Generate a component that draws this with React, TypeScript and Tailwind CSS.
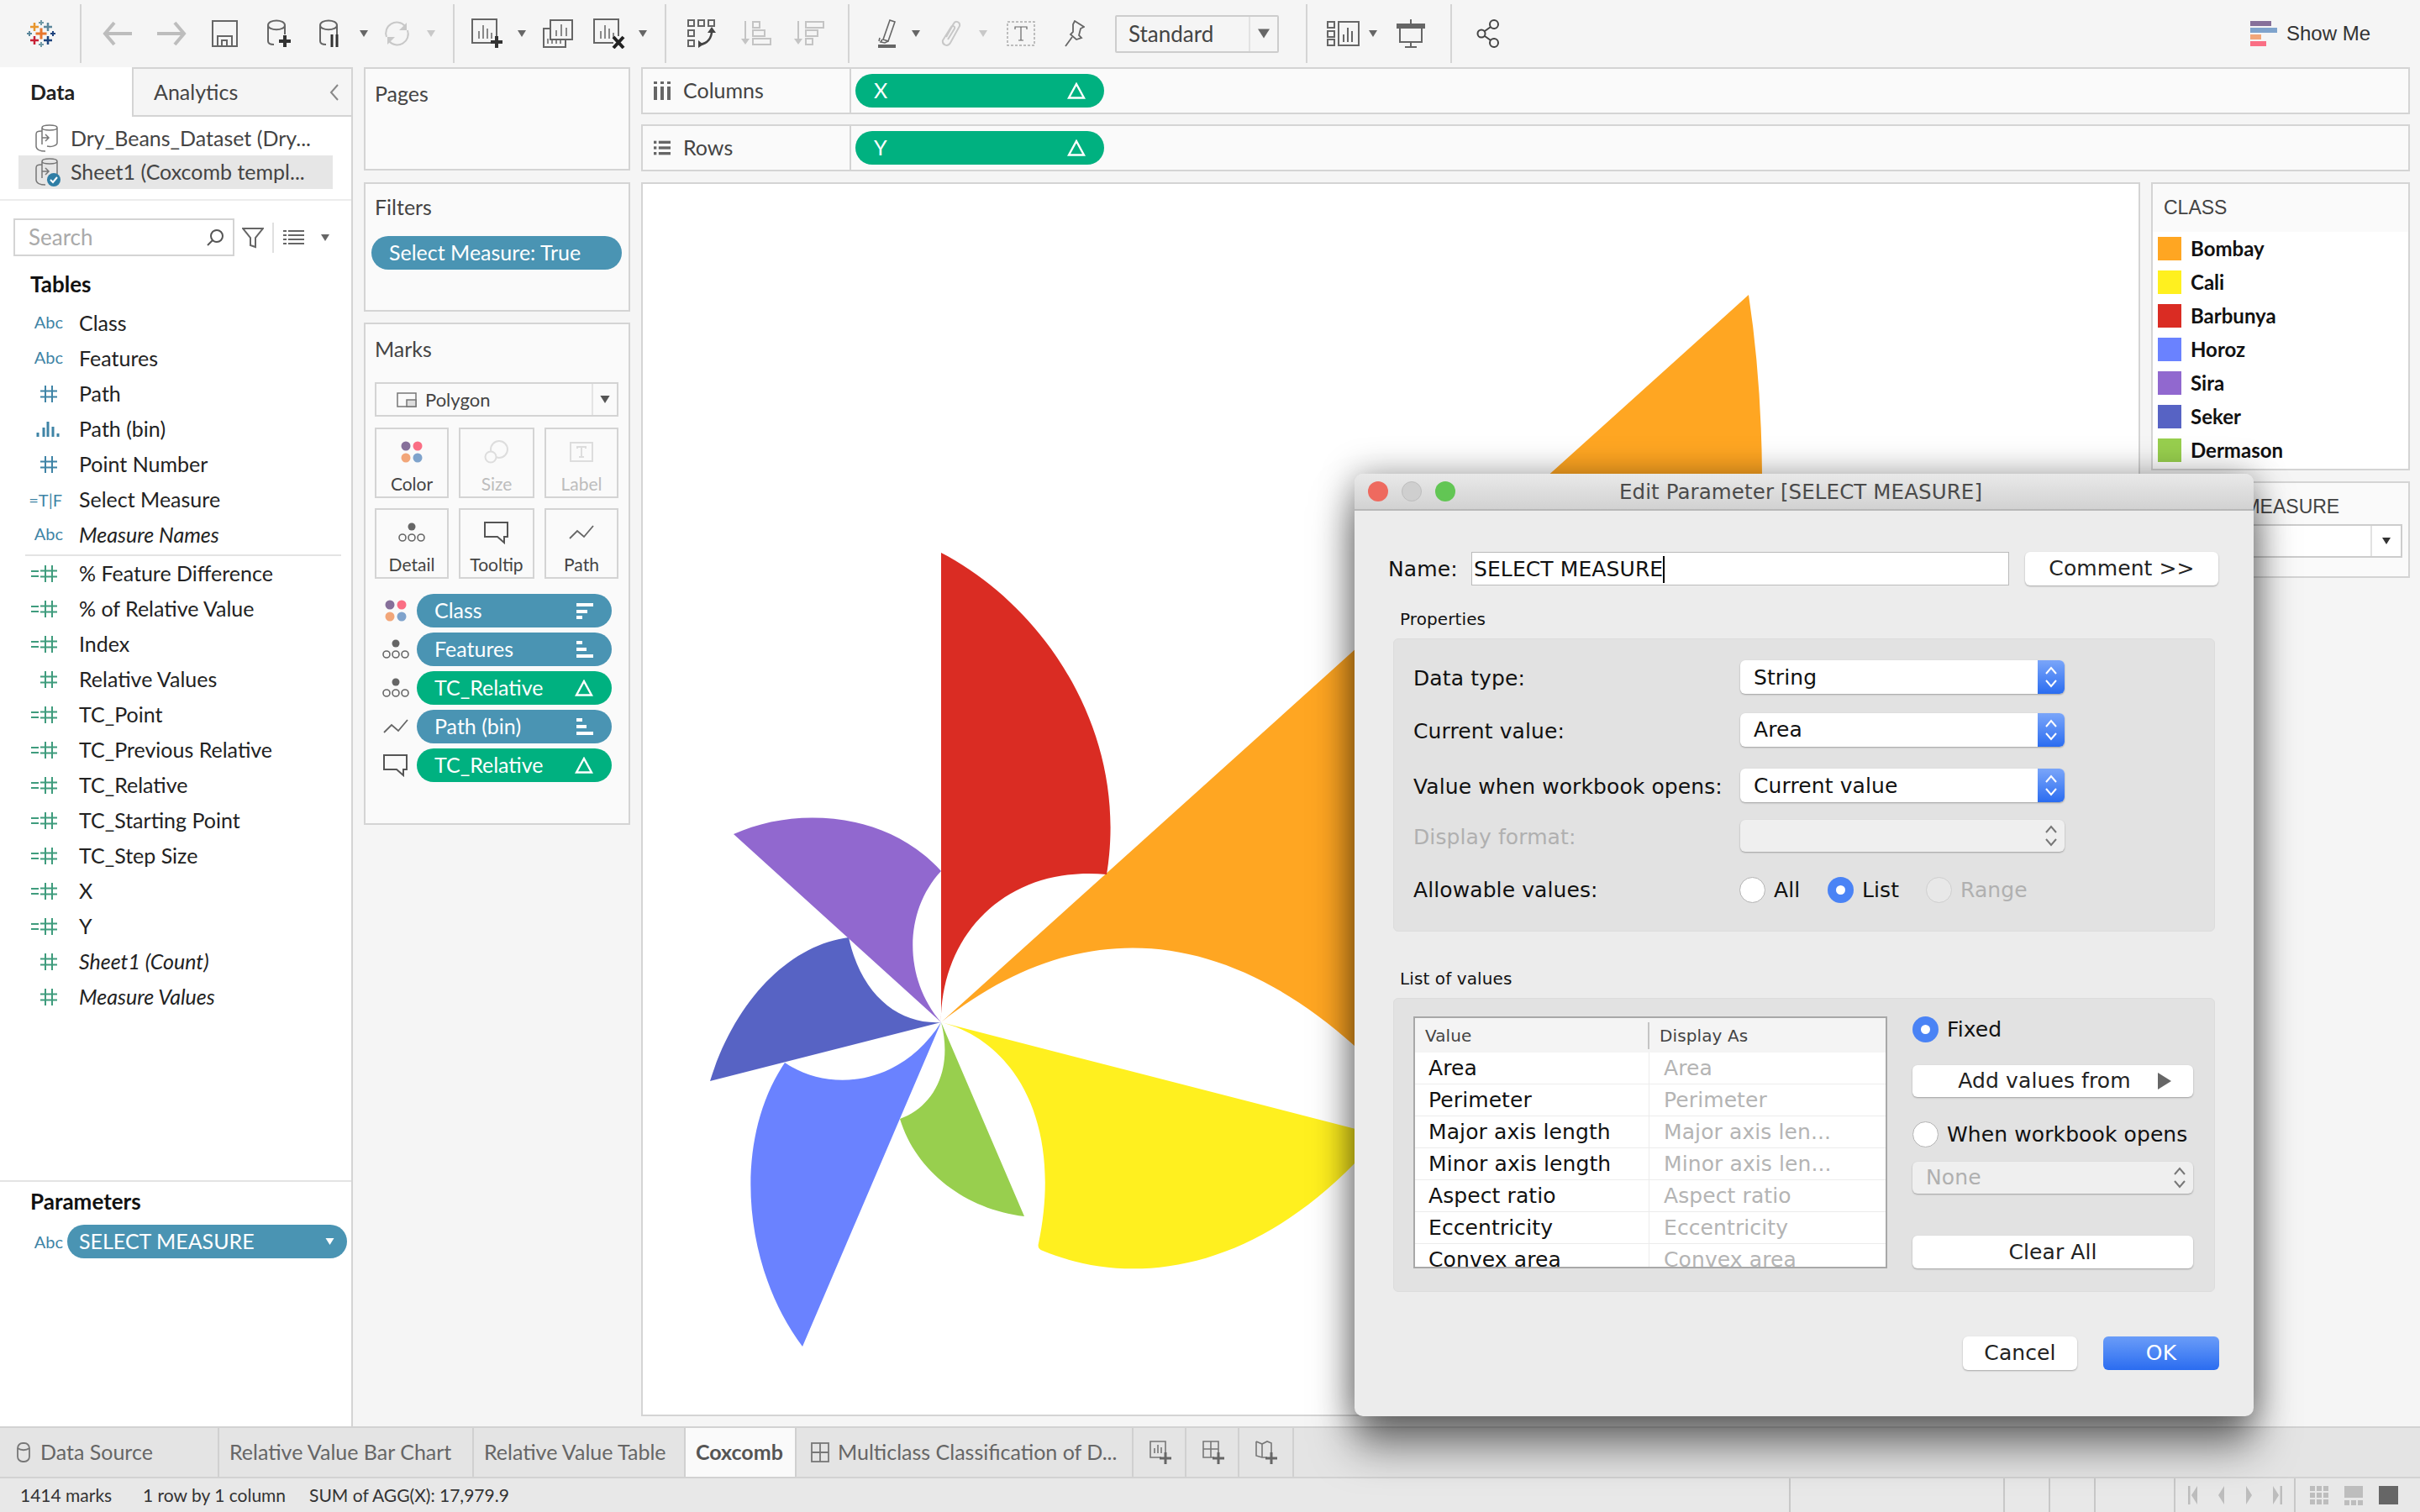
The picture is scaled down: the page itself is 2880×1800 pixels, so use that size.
import React from "react";

const Chart = () => (
  <svg viewBox="765 219 1780 1465" className="w-full h-full block">
    <path fill="#ffa622" d="M1120 1217 L2081 351 Q2096 450 2097 564 C2100 800 2050 1200 1900 1450 L1612 1245 C1450 1100 1280 1090 1120 1217 Z" />
    <path fill="#fff01f" d="M1120 1217 L1900 1418 L1612 1385 C1480 1520 1340 1530 1241 1489 Q1234 1487 1236 1480 C1265 1340 1210 1240 1120 1217 Z" />
    <path fill="#da2c23" d="M1120 1217 L1120 658 C1240 720 1345 870 1317 1041 C1200 1030 1120 1110 1120 1217 Z" />
    <path fill="#6a82ff" d="M1120 1217 L955 1603 C885 1510 870 1360 934 1265 C985 1300 1070 1295 1120 1217 Z" />
    <path fill="#5763c4" d="M1120 1217 L845 1287 C875 1190 940 1125 1010 1116 C1025 1185 1070 1220 1120 1217 Z" />
    <path fill="#9168cf" d="M1120 1217 L873 993 C945 960 1055 965 1120 1037 C1075 1085 1075 1165 1120 1217 Z" />
    <path fill="#98cf4e" d="M1120 1217 L1219 1448 C1150 1440 1090 1395 1071 1332 C1110 1318 1135 1275 1120 1217 Z" />
  </svg>
);

const Caret = ({ c = "#666", w = 10, h = 8 }: { c?: string; w?: number; h?: number }) => (
  <svg width={w} height={h} viewBox="0 0 10 8"><path d="M0 0H10L5 8Z" fill={c} /></svg>
);
const Sep = ({ ml }: { ml: string }) => <div className={`${ml} w-[2px] h-[70px] bg-[#d4d4d4] shrink-0`} />;

const S = "#666";
const Logo = () => {
  const cross = (x: number, y: number, r: number, c: string, sw = 2) => (
    <path d={`M${x - r} ${y}H${x + r}M${x} ${y - r}V${y + r}`} stroke={c} strokeWidth={sw} fill="none" />
  );
  return (
    <svg width="34" height="32" viewBox="0 0 34 32">
      {cross(17, 16, 6.5, "#e8762c", 3)}
      {cross(9, 8, 5, "#e8962c", 2.5)}
      {cross(25, 8, 5, "#5b879b", 2.5)}
      {cross(9, 24, 5, "#c72035", 2.5)}
      {cross(25, 24, 5, "#1f457e", 2.5)}
      {cross(17, 3, 3, "#7099a6")}
      {cross(17, 29, 3, "#7099a6")}
      {cross(3, 16, 3, "#5b879b")}
      {cross(31, 16, 3, "#1f447e")}
    </svg>
  );
};
const Arrow = ({ flip }: { flip?: boolean }) => (
  <svg width="35" height="30" viewBox="0 0 35 30" className={flip ? "-scale-x-100" : ""}>
    <path d="M14 2L3 15L14 28M3 15H35" stroke="#bdbdbd" strokeWidth="4" fill="none" />
  </svg>
);
const Save = () => (
  <svg width="31" height="32" viewBox="0 0 31 32" fill="none" stroke={S} strokeWidth="2">
    <rect x="1" y="1" width="29" height="30" />
    <path d="M7 31V19H24V31M12 31V24H18V31" />
  </svg>
);
const Cyl = ({ extra }: { extra: React.ReactNode }) => (
  <svg width="30" height="34" viewBox="0 0 30 34" fill="none" stroke={S} strokeWidth="2">
    <path d="M1 7C1 -0.5 21 -0.5 21 7C21 14 1 14 1 7V26C1 29 4 30 8 30M21 7V18" />
    {extra}
  </svg>
);
const Plus = ({ x, y }: { x: number; y: number }) => (
  <path d={`M${x - 7} ${y}H${x + 7}M${x} ${y - 7}V${y + 7}`} stroke="#333" strokeWidth="4" fill="none" />
);
const Refresh = () => (
  <svg width="35" height="32" viewBox="0 0 35 32" fill="none" stroke="#c8c8c8" strokeWidth="2">
    <path d="M5 20A13 13 0 0 1 27 7M30 12A13 13 0 0 1 8 25" />
    <path d="M29 3V12H20M6 29V20H15" fill="#c8c8c8" stroke="none" />
  </svg>
);
const Sheet = ({ mark }: { mark: React.ReactNode }) => (
  <svg width="39" height="36" viewBox="0 0 39 36" fill="none" stroke={S} strokeWidth="2">
    <path d="M24 29H1V1H30V21" />
    <path d="M9 24V15M14 24V8M19 24V12M24 24V17" strokeWidth="1.5" />
    {mark}
  </svg>
);
const Dup = () => (
  <svg width="36" height="34" viewBox="0 0 36 34" fill="none" stroke={S} strokeWidth="2">
    <rect x="9" y="1" width="26" height="23" fill="#f5f5f5" />
    <path d="M9 11H1V33H27V24" />
    <path d="M16 20V13M22 20V6M28 20V10" strokeWidth="1.5" />
    <path d="M6 29V23M11 29V23M16 29V23M21 29V23" strokeWidth="1.5" />
  </svg>
);
const Swap = () => (
  <svg width="35" height="34" viewBox="0 0 35 34" fill="none" stroke={S} strokeWidth="2">
    <rect x="1" y="1" width="7" height="7" /><rect x="13" y="1" width="7" height="7" /><rect x="25" y="1" width="7" height="7" />
    <rect x="1" y="13" width="7" height="7" /><rect x="1" y="25" width="7" height="7" />
    <path d="M29 14C29 22 24 29 15 30" stroke="#444" strokeWidth="2.5" />
    <path d="M29 9L34 16H24ZM13 25L13 34L19 30Z" fill="#444" stroke="none" />
  </svg>
);
const SortI = ({ desc }: { desc?: boolean }) => (
  <svg width="36" height="30" viewBox="0 0 36 30" fill="none" stroke="#c4c4c4" strokeWidth="2">
    <path d="M5 0V26" />
    <path d="M0 21H10L5 28Z" fill="#c4c4c4" stroke="none" />
    {desc ? (
      <>
        <rect x="14" y="1" width="21" height="7" /><rect x="14" y="11" width="14" height="7" /><rect x="14" y="21" width="8" height="7" />
      </>
    ) : (
      <>
        <rect x="14" y="1" width="8" height="7" /><rect x="14" y="11" width="14" height="7" /><rect x="14" y="21" width="21" height="7" />
      </>
    )}
  </svg>
);
const Highlighter = () => (
  <svg width="21" height="34" viewBox="0 0 21 34" fill="none" stroke={S} strokeWidth="1.6">
    <path d="M6 24L14 1L20 3L12 26Z" />
    <path d="M5 24L3 27L8 28L12 26M2 22L1 26" />
    <rect x="0" y="30" width="21" height="4" fill={S} stroke="none" />
  </svg>
);
const Clip = () => (
  <svg width="24" height="32" viewBox="0 0 24 32" fill="none" stroke="#c8c8c8" strokeWidth="2">
    <path d="M6 20L15 4C17 0 23 2 22 7L11 27C8 32 1 30 2 24L12 8C13 6 17 7 16 10L8 23" />
  </svg>
);
const TBox = () => (
  <svg width="34" height="30" viewBox="0 0 34 30" fill="none">
    <rect x="1" y="1" width="32" height="28" stroke="#aaa" strokeWidth="1.5" strokeDasharray="3 2" />
    <path d="M10 10V7H24V10M17 7V23M14 23H20" stroke={S} strokeWidth="1.2" />
  </svg>
);
const Pin = () => (
  <svg width="26" height="32" viewBox="0 0 26 32" fill="none" stroke={S} strokeWidth="1.8">
    <path d="M14 1L25 8L21 10L19 18L22 21L16 23L9 17L12 14L12 5Z" />
    <path d="M11 20L3 31" />
  </svg>
);
const Cards = () => (
  <svg width="39" height="30" viewBox="0 0 39 30" fill="none" stroke={S} strokeWidth="2">
    <rect x="1" y="1" width="8" height="7" /><rect x="1" y="12" width="8" height="7" /><rect x="1" y="22" width="8" height="7" />
    <rect x="14" y="1" width="24" height="28" />
    <path d="M20 25V16M25 25V8M30 25V12" />
  </svg>
);
const Pres = () => (
  <svg width="34" height="34" viewBox="0 0 34 34" fill="none" stroke={S} strokeWidth="2">
    <path d="M17 0V5M17 27V33M10 33H24" />
    <rect x="0" y="5" width="34" height="6" fill={S} stroke="none" />
    <path d="M4 10V27H30V10" />
  </svg>
);
const Share = () => (
  <svg width="28" height="34" viewBox="0 0 28 34" fill="none" stroke="#444" strokeWidth="2">
    <circle cx="6" cy="17" r="4.5" /><circle cx="21" cy="6" r="5" /><circle cx="21" cy="28" r="5" />
    <path d="M10 14L17 9M10 20L17 25" />
  </svg>
);
const ShowMeIcon = () => (
  <svg width="32" height="30" viewBox="0 0 32 30">
    <rect x="0" y="0" width="25" height="6" fill="#86709a" />
    <rect x="0" y="8" width="32" height="6" fill="#7fa3cc" />
    <rect x="0" y="16" width="13" height="6" fill="#f2a679" />
    <rect x="0" y="24" width="19" height="6" fill="#fa6e84" />
  </svg>
);

const Hash = ({ c = "#3f9c7d" }: { c?: string }) => (
  <svg width="20" height="20" viewBox="0 0 20 20" stroke={c} strokeWidth="2" fill="none">
    <path d="M6 0V20M14 0V20M0 6.5H20M0 13.5H20" />
  </svg>
);
const CalcHash = () => (
  <div className="flex items-center gap-[2px]">
    <svg width="9" height="8" viewBox="0 0 9 8"><path d="M0 1H9M0 7H9" stroke="#3f9c7d" strokeWidth="2" /></svg>
    <Hash />
  </div>
);
const BarsI = () => (
  <svg width="28" height="18" viewBox="0 0 28 18" stroke="#3f84a6" strokeWidth="3">
    <path d="M2 18V13M9 18V7M14 18V0M20 18V6M26 18V14" />
  </svg>
);
const Abc = () => <span className="text-[20px] text-[#3f84a6] leading-none">Abc</span>;

type F = { n: string; k: string; it?: boolean };
const dims: F[] = [
  { n: "Class", k: "abc" },
  { n: "Features", k: "abc" },
  { n: "Path", k: "bhash" },
  { n: "Path (bin)", k: "bars" },
  { n: "Point Number", k: "bhash" },
  { n: "Select Measure", k: "tf" },
  { n: "Measure Names", k: "abc", it: true },
];
const meas: F[] = [
  { n: "% Feature Difference", k: "calc" },
  { n: "% of Relative Value", k: "calc" },
  { n: "Index", k: "calc" },
  { n: "Relative Values", k: "hash" },
  { n: "TC_Point", k: "calc" },
  { n: "TC_Previous Relative", k: "calc" },
  { n: "TC_Relative", k: "calc" },
  { n: "TC_Starting Point", k: "calc" },
  { n: "TC_Step Size", k: "calc" },
  { n: "X", k: "calc" },
  { n: "Y", k: "calc" },
  { n: "Sheet1 (Count)", k: "hash", it: true },
  { n: "Measure Values", k: "hash", it: true },
];
const FieldIcon = ({ k }: { k: string }) => {
  if (k === "abc") return <div className="pr-[19px]"><Abc /></div>;
  if (k === "bhash") return <div className="pr-[26px]"><Hash c="#3f84a6" /></div>;
  if (k === "bars") return <div className="pr-[23px]"><BarsI /></div>;
  if (k === "tf") return <div className="pr-[20px] text-[20px] text-[#3f84a6] leading-none">=T|F</div>;
  if (k === "calc") return <div className="pr-[26px]"><CalcHash /></div>;
  return <div className="pr-[26px]"><Hash /></div>;
};
const Field = ({ f }: { f: F }) => (
  <div className="flex items-center h-[42px] shrink-0">
    <div className="w-[94px] flex justify-end shrink-0"><FieldIcon k={f.k} /></div>
    <span className={`text-[25px] text-[#222] ${f.it ? "italic" : ""}`}>{f.n}</span>
  </div>
);

const DsIcon = ({ check }: { check?: boolean }) => (
  <svg width="32" height="34" viewBox="0 0 32 34" fill="none" stroke="#777" strokeWidth="1.5" className="shrink-0">
    <path d="M10 4C10 0 28 0 28 4C28 8 10 8 10 4V24M28 4V22C28 26 20 27 16 26" />
    <path d="M10 8C4 8 3 9 3 12V26C3 30 8 32 14 32" />
    <path d="M10 16H18M14 12L18 16L14 20" />
    {check && <circle cx="24" cy="26" r="8" fill="#2f7ea5" stroke="none" />}
    {check && <path d="M20 26L23 29L28 23" stroke="#fff" strokeWidth="2" />}
  </svg>
);

const Pill = ({ children, green, right }: { children: React.ReactNode; green?: boolean; right?: React.ReactNode }) => (
  <div className={`w-full h-[40px] rounded-full flex items-center justify-between pl-[21px] pr-[22px] text-[25px] text-white ${green ? "bg-[#00b180]" : "bg-[#4a94b3]"}`}>
    <span>{children}</span>
    {right}
  </div>
);
const Delta = () => (
  <svg width="22" height="20" viewBox="0 0 22 20" fill="none" stroke="#fff" strokeWidth="2.4"><path d="M11 2L20 18.5H2Z" /></svg>
);
const SortDesc = () => (
  <svg width="20" height="20" viewBox="0 0 20 20" fill="#fff"><rect x="0" y="1" width="20" height="4" /><rect x="0" y="9" width="13" height="4" /><rect x="0" y="16" width="7" height="4" /></svg>
);
const SortAsc = () => (
  <svg width="20" height="20" viewBox="0 0 20 20" fill="#fff"><rect x="0" y="0" width="7" height="4" /><rect x="0" y="8" width="12" height="4" /><rect x="0" y="16" width="20" height="4" /></svg>
);
const ColorDots = () => (
  <svg width="26" height="26" viewBox="0 0 26 26">
    <circle cx="6" cy="6" r="5.5" fill="#86709a" /><circle cx="20" cy="6" r="5.5" fill="#fa6e84" />
    <circle cx="6" cy="20" r="5.5" fill="#f2a679" /><circle cx="20" cy="20" r="5.5" fill="#7fa3cc" />
  </svg>
);
const DetailI = () => (
  <svg width="32" height="24" viewBox="0 0 32 24" fill="none" stroke="#666" strokeWidth="1.6">
    <circle cx="16" cy="5" r="4.5" fill="#666" stroke="none" />
    <circle cx="5" cy="18" r="4" /><circle cx="16" cy="18" r="4" /><circle cx="27" cy="18" r="4" />
  </svg>
);
const TipI = () => (
  <svg width="30" height="27" viewBox="0 0 30 27" fill="none" stroke="#555" strokeWidth="2">
    <path d="M1 1H28V18H24L24 25L16 18H1Z" />
  </svg>
);
const PathI = () => (
  <svg width="30" height="18" viewBox="0 0 30 18" fill="none" stroke="#666" strokeWidth="1.8"><path d="M1 16L10 7L18 14L29 1" /></svg>
);
const MarkBtn = ({ icon, label, dim, w }: { icon: React.ReactNode; label: string; dim?: boolean; w: string }) => (
  <div className={`${w} h-[84px] border-2 border-[#d4d4d4] flex flex-col items-center justify-between pt-[12px] pb-[1px] text-[21px] ${dim ? "text-[#bdbdbd]" : "text-[#444]"}`}>
    <div className="h-[30px] flex items-center">{icon}</div>
    <span className="leading-[28px]">{label}</span>
  </div>
);
const MarkRow = ({ icon, children }: { icon: React.ReactNode; children: React.ReactNode }) => (
  <div className="flex items-center h-[40px]">
    <div className="w-[50px] flex justify-center shrink-0">{icon}</div>
    <div className="w-[232px]">{children}</div>
  </div>
);

const Card = ({ className, children }: { className: string; children?: React.ReactNode }) => (
  <div className={`border-2 border-[#d4d4d4] bg-[#fafafa] shrink-0 ${className}`}>{children}</div>
);
const ShelfPill = ({ t }: { t: string }) => (
  <div className="ml-[5px] w-[296px] h-[40px] rounded-full bg-[#00b180] flex items-center justify-between pl-[22px] pr-[22px] text-[25px] text-white">
    <span>{t}</span>
    <Delta />
  </div>
);
const Shelf = ({ icon, label, t, cls }: { icon: React.ReactNode; label: string; t: string; cls: string }) => (
  <Card className={`h-[56px] flex items-center ${cls}`}>
    <div className="w-[13px] shrink-0" />
    <div className="w-[20px] flex justify-center shrink-0">{icon}</div>
    <span className="ml-[15px] w-[198px] shrink-0 text-[25px] text-[#444]">{label}</span>
    <div className="w-[2px] h-full bg-[#d4d4d4] shrink-0" />
    <ShelfPill t={t} />
  </Card>
);

const legend: [string, string][] = [
  ["Bombay", "bg-[#ffa622]"], ["Cali", "bg-[#fff01f]"], ["Barbunya", "bg-[#da2c23]"], ["Horoz", "bg-[#6a82ff]"],
  ["Sira", "bg-[#9168cf]"], ["Seker", "bg-[#5763c4]"], ["Dermason", "bg-[#98cf4e]"],
];

const Tab = ({ w, children, active, pl = "pl-[12px]" }: { w: string; children: React.ReactNode; active?: boolean; pl?: string }) => (
  <div className={`${w} ${pl} h-full flex items-center border-r-2 border-[#d0d0d0] shrink-0 text-[25px] ${active ? "bg-[#fafafa] font-bold text-[#555]" : "text-[#666]"}`}>{children}</div>
);
const NewI = ({ kind }: { kind: number }) => (
  <svg width="26" height="28" viewBox="0 0 26 28" fill="none" stroke="#777" strokeWidth="1.6">
    {kind === 0 && <path d="M14 20H1V1H19V14M6 15V9M10 15V5M14 15V8" />}
    {kind === 1 && <path d="M14 20H1V1H19V14M10 1V20M1 10H19" />}
    {kind === 2 && <path d="M1 1L8 4L14 1L19 3V14M14 20H8L1 18V1M8 4V20" />}
    <path d="M19 14V28M12 21H26" stroke="#666" strokeWidth="3" />
  </svg>
);

const Chev = ({ c }: { c: string }) => (
  <svg width="18" height="30" viewBox="0 0 18 30" fill="none" stroke={c} strokeWidth="2">
    <path d="M3 11L9 4L15 11M3 19L9 26L15 19" />
  </svg>
);
const Sel = ({ t, dim, w = "w-[386px]", h = "h-[40px]" }: { t?: string; dim?: boolean; w?: string; h?: string }) => (
  <div className={`${w} ${h} rounded-[6px] flex items-center overflow-hidden shrink-0 shadow-[0_1px_2px_rgba(0,0,0,0.3)] ${dim ? "bg-[#efefef] text-[#b0b0b0]" : "bg-white text-[#111]"}`}>
    <span className="flex-1 pl-[16px]">{t}</span>
    {dim ? (
      <div className="w-[32px] h-full flex items-center justify-center"><Chev c="#777" /></div>
    ) : (
      <div className="w-[32px] h-full flex items-center justify-center bg-gradient-to-b from-[#7aa5f9] to-[#2a6cf0]"><Chev c="#fff" /></div>
    )}
  </div>
);
const Radio = ({ on, dim }: { on?: boolean; dim?: boolean }) =>
  on ? (
    <div className="w-[31px] h-[31px] rounded-full bg-[#4a83f5] flex items-center justify-center shrink-0"><div className="w-[11px] h-[11px] rounded-full bg-white" /></div>
  ) : (
    <div className={`w-[31px] h-[31px] rounded-full border shrink-0 ${dim ? "bg-[#e8e8e8] border-[#cfcfcf]" : "bg-white border-[#b4b4b4]"}`} />
  );
const Btn = ({ children, cls }: { children: React.ReactNode; cls: string }) => (
  <div className={`bg-white rounded-[6px] flex items-center justify-center shadow-[0_1px_2px_rgba(0,0,0,0.3)] text-[#222] shrink-0 ${cls}`}>{children}</div>
);
const vals: [string, string][] = [
  ["Area", "Area"], ["Perimeter", "Perimeter"], ["Major axis length", "Major axis len..."],
  ["Minor axis length", "Minor axis len..."], ["Aspect ratio", "Aspect ratio"], ["Eccentricity", "Eccentricity"], ["Convex area", "Convex area"],
];

const Dialog = () => (
  <div className="absolute left-[1612px] top-[564px] w-[1070px] h-[1122px] bg-[#ececec] rounded-[10px] shadow-[0_35px_50px_rgba(0,0,0,0.5),0_0_40px_rgba(0,0,0,0.35)] flex flex-col overflow-hidden text-[25px] tracking-[0.1px] text-[#111] [font-family:'DejaVu_Sans',sans-serif]">
    <div className="h-[44px] shrink-0 bg-gradient-to-b from-[#e9e9e9] to-[#d2d2d2] border-b-2 border-[#b8b8b8] flex items-center relative">
      <div className="flex gap-[16px] pl-[16px]">
        <div className="w-[24px] h-[24px] rounded-full bg-[#ee6a5f]" />
        <div className="w-[24px] h-[24px] rounded-full bg-[#cfcfcf] border border-[#bdbdbd]" />
        <div className="w-[24px] h-[24px] rounded-full bg-[#62c654]" />
      </div>
      <div className="flex-1 text-center text-[24.5px] text-[#4a4a4a] pr-[128px] pt-[2px] whitespace-nowrap">Edit Parameter [SELECT MEASURE]</div>
    </div>
    <div className="mt-[49px] h-[40px] flex items-center pl-[40px] shrink-0">
      <span className="w-[99px] pt-[2px]">Name:</span>
      <div className="w-[640px] h-[40px] bg-white border border-[#bbb] flex items-center pl-[2px] pt-[1px]">SELECT MEASURE<span className="w-[2px] h-[32px] bg-black" /></div>
      <Btn cls="ml-[19px] w-[230px] h-[40px]">Comment &gt;&gt;</Btn>
    </div>
    <div className="mt-[25px] pl-[54px] h-[30px] flex items-center text-[20px] shrink-0">Properties</div>
    <div className="ml-[46px] mt-[8px] w-[978px] h-[349px] shrink-0 bg-[#e2e2e2] border border-[#dcdcdc] rounded-[6px] pl-[23px] pt-[25px] flex flex-col">
      <div className="flex items-center"><span className="w-[389px] pt-[3px]">Data type:</span><Sel t="String" /></div>
      <div className="flex items-center mt-[22px]"><span className="w-[389px] pt-[3px]">Current value:</span><Sel t="Area" /></div>
      <div className="flex items-center mt-[26px]"><span className="w-[389px] pt-[3px]">Value when workbook opens:</span><Sel t="Current value" /></div>
      <div className="flex items-center mt-[19px] text-[#b0b0b0]"><span className="w-[389px] pt-[3px]">Display format:</span><Sel dim h="h-[38px]" /></div>
      <div className="flex items-center h-[31px] mt-[29px]">
        <span className="w-[388px]">Allowable values:</span>
        <Radio /><span className="ml-[10px] w-[64px]">All</span>
        <Radio on /><span className="ml-[10px] w-[76px]">List</span>
        <Radio dim /><span className="ml-[10px] text-[#b0b0b0]">Range</span>
      </div>
    </div>
    <div className="mt-[41px] pl-[54px] h-[30px] flex items-center text-[20px] shrink-0">List of values</div>
    <div className="ml-[46px] mt-[8px] w-[978px] h-[350px] shrink-0 bg-[#e2e2e2] border border-[#dcdcdc] rounded-[6px] pl-[23px] pt-[21px] flex gap-[30px]">
      <div className="w-[564px] h-[300px] border-2 border-[#a8a8a8] bg-white overflow-hidden shrink-0">
        <div className="h-[41px] bg-[#f4f4f4] flex items-center text-[20px] text-[#444]">
          <span className="w-[279px] pl-[12px] border-r-2 border-[#c4c4c4] h-[32px] flex items-center">Value</span>
          <span className="pl-[12px]">Display As</span>
        </div>
        {vals.map(([a, b]) => (
          <div key={a} className="h-[38px] flex items-center border-b border-[#ececec] shrink-0">
            <span className="w-[279px] pl-[16px] h-full flex items-center border-r border-[#ececec]">{a}</span>
            <span className="pl-[17px] text-[#b4b4b4]">{b}</span>
          </div>
        ))}
      </div>
      <div className="w-[334px] flex flex-col">
        <div className="flex items-center h-[31px]"><Radio on /><span className="ml-[10px]">Fixed</span></div>
        <Btn cls="mt-[27px] w-full h-[38px] relative pr-[20px]">Add values from
          <svg width="16" height="20" viewBox="0 0 16 20" className="absolute right-[26px]"><path d="M0 0L16 10L0 20Z" fill="#666" /></svg>
        </Btn>
        <div className="flex items-center h-[31px] mt-[29px]"><Radio /><span className="ml-[10px] whitespace-nowrap">When workbook opens</span></div>
        <Sel t="None" dim w="w-full mt-[17px]" h="h-[38px]" />
        <Btn cls="mt-[50px] w-full h-[39px]">Clear All</Btn>
      </div>
    </div>
    <div className="mt-[53px] flex justify-end pr-[41px] shrink-0">
      <Btn cls="w-[136px] h-[40px]">Cancel</Btn>
      <div className="ml-[31px] w-[138px] h-[40px] rounded-[6px] bg-gradient-to-b from-[#6a9cf8] to-[#2a6cf0] text-white flex items-center justify-center">OK</div>
    </div>
  </div>
);

const Nav = ({ last, flip }: { last?: boolean; flip?: boolean }) => (
  <svg width="16" height="22" viewBox="0 0 16 22" fill="#bdbdbd" className={flip ? "-scale-x-100" : ""}>
    <path d="M4 11L11 0V22Z" />
    {last && <rect x="0" y="0" width="2.5" height="22" />}
  </svg>
);

export default function App() {
  return (
    <div className="relative w-[2880px] h-[1800px] overflow-hidden bg-[#f5f5f5] flex flex-col [font-family:Lato,sans-serif] text-[#333]">
      {/* toolbar */}
      <div className="h-[80px] shrink-0 flex items-center">
        <div className="ml-[32px] w-[34px]"><Logo /></div>
        <Sep ml="ml-[29px]" />
        <div className="ml-[25px]"><Arrow /></div>
        <div className="ml-[30px]"><Arrow flip /></div>
        <div className="ml-[30px]"><Save /></div>
        <div className="ml-[35px]"><Cyl extra={<Plus x={21} y={26} />} /></div>
        <div className="ml-[32px] w-[28px]"><Cyl extra={<path d="M15 18V33M21 18V33" stroke="#333" strokeWidth="3" />} /></div>
        <div className="ml-[20px]"><Caret /></div>
        <div className="ml-[17px]"><Refresh /></div>
        <div className="ml-[18px]"><Caret c="#c8c8c8" /></div>
        <Sep ml="ml-[21px]" />
        <div className="ml-[20px]"><Sheet mark={<Plus x={30} y={28} />} /></div>
        <div className="ml-[16px]"><Caret /></div>
        <div className="ml-[20px]"><Dup /></div>
        <div className="ml-[24px] w-[36px]"><Sheet mark={<path d="M24 22L36 35M36 22L24 35" stroke="#222" strokeWidth="4" />} /></div>
        <div className="ml-[18px]"><Caret /></div>
        <Sep ml="ml-[21px]" />
        <div className="ml-[25px]"><Swap /></div>
        <div className="ml-[29px]"><SortI /></div>
        <div className="ml-[27px]"><SortI desc /></div>
        <Sep ml="ml-[28px]" />
        <div className="ml-[34px]"><Highlighter /></div>
        <div className="ml-[19px]"><Caret /></div>
        <div className="ml-[25px]"><Clip /></div>
        <div className="ml-[21px]"><Caret c="#c8c8c8" /></div>
        <div className="ml-[23px]"><TBox /></div>
        <div className="ml-[33px]"><Pin /></div>
        <div className="ml-[36px] w-[195px] h-[45px] border-2 border-[#cdcdcd] rounded-[2px] flex items-center text-[26px] text-[#444]">
          <span className="w-[157px] pl-[14px]">Standard</span>
          <div className="w-[2px] h-full bg-[#e2e2e2]" />
          <div className="flex-1 flex justify-center"><Caret c="#666" w={14} h={12} /></div>
        </div>
        <Sep ml="ml-[32px]" />
        <div className="ml-[23px]"><Cards /></div>
        <div className="ml-[11px]"><Caret /></div>
        <div className="ml-[23px]"><Pres /></div>
        <Sep ml="ml-[30px]" />
        <div className="ml-[29px]"><Share /></div>
        <div className="ml-auto mr-[59px] flex items-center gap-[11px] text-[24px] text-[#333] [font-family:'Liberation_Sans',sans-serif]">
          <ShowMeIcon /><span>Show Me</span>
        </div>
      </div>

      {/* middle */}
      <div className="h-[1618px] shrink-0 flex">
        {/* sidebar */}
        <div className="w-[420px] shrink-0 bg-white border-r-2 border-[#d4d4d4] flex flex-col relative">
          <div className="flex h-[59px] shrink-0">
            <div className="w-[157px] flex items-center pl-[36px] text-[25px] font-bold text-[#222]">Data</div>
            <div className="flex-1 bg-[#f5f5f5] border-l-2 border-b-2 border-t-2 border-[#d4d4d4] flex items-center justify-between pl-[24px] pr-[14px] text-[25px] text-[#444]">
              <span>Analytics</span>
              <svg width="12" height="22" viewBox="0 0 12 22" fill="none" stroke="#888" strokeWidth="2"><path d="M10 2L2 11L10 20" /></svg>
            </div>
          </div>
          <div className="h-[40px] mt-[6px] ml-[40px] flex items-center gap-[12px] text-[25px] text-[#444] shrink-0">
            <DsIcon /><span className="whitespace-nowrap">Dry_Beans_Dataset (Dry...</span>
          </div>
          <div className="h-[40px] mx-[22px] pl-[18px] bg-[#e6e6e6] flex items-center gap-[12px] text-[25px] text-[#444] shrink-0">
            <DsIcon check /><span className="whitespace-nowrap">Sheet1 (Coxcomb templ...</span>
          </div>
          <div className="h-[2px] mt-[12px] bg-[#ececec] shrink-0" />
          <div className="mt-[21px] h-[45px] flex items-center shrink-0">
            <div className="ml-[16px] w-[263px] h-[45px] border-2 border-[#d4d4d4] flex items-center justify-between pl-[16px] pr-[10px] text-[26px] text-[#aaa]">
              <span>Search</span>
              <svg width="22" height="22" viewBox="0 0 22 22" fill="none" stroke="#555" strokeWidth="2"><circle cx="13" cy="9" r="7" /><path d="M8 14L2 20" /></svg>
            </div>
            <svg width="26" height="26" viewBox="0 0 26 26" fill="none" stroke="#666" strokeWidth="2" className="ml-[9px]"><path d="M1 2H25L16 13V24L10 22V13Z" /></svg>
            <div className="ml-[10px] w-[2px] h-[36px] bg-[#e0e0e0]" />
            <svg width="25" height="19" viewBox="0 0 25 19" stroke="#666" strokeWidth="2" className="ml-[11px]"><path d="M0 2H4M6 2H25M0 7H4M6 7H25M0 12H4M6 12H25M0 17H4M6 17H25" /></svg>
            <div className="ml-[18px]"><Caret c="#666" w={14} h={8} /></div>
          </div>
          <div className="ml-[36px] mt-[15px] h-[36px] flex items-center text-[26px] font-bold text-[#111] shrink-0">Tables</div>
          <div className="mt-[8px] flex flex-col shrink-0">
            {dims.map((f) => <Field key={f.n} f={f} />)}
          </div>
          <div className="ml-[30px] mr-[12px] mt-[2px] h-[2px] bg-[#e4e4e4] shrink-0" />
          <div className="flex flex-col shrink-0">
            {meas.map((f) => <Field key={f.n} f={f} />)}
          </div>
          <div className="mt-auto h-[2px] bg-[#e4e4e4] shrink-0" />
          <div className="h-[291px] shrink-0 flex flex-col">
            <div className="ml-[36px] mt-[5px] h-[36px] flex items-center text-[26px] font-bold text-[#111]">Parameters</div>
            <div className="mt-[10px] flex items-center">
              <div className="w-[80px] flex justify-end pr-[5px]"><Abc /></div>
              <div className="w-[333px] h-[40px] rounded-full bg-[#4a94b3] flex items-center justify-between pl-[14px] pr-[14px] text-[25px] text-white">
                <span>SELECT MEASURE</span>
                <Caret c="#fff" w={13} h={8} />
              </div>
            </div>
          </div>
        </div>

        {/* cards */}
        <div className="w-[317px] ml-[13px] shrink-0 flex flex-col">
          <Card className="h-[123px] pl-[11px] pt-[11px] text-[25px] text-[#444]">Pages</Card>
          <Card className="mt-[14px] h-[154px] pl-[7px] pt-[12px] text-[25px] text-[#444] flex flex-col">
            <span className="pl-[4px] leading-[30px]">Filters</span>
            <div className="mt-[20px]"><div className="w-[298px] h-[40px] rounded-full bg-[#4a94b3] flex items-center pl-[21px] text-white">Select Measure: True</div></div>
          </Card>
          <Card className="mt-[13px] h-[598px] pl-[11px] pt-[14px] flex flex-col">
            <span className="text-[25px] text-[#444] leading-[30px]">Marks</span>
            <div className="mt-[25px] w-[290px] h-[41px] border-2 border-[#d4d4d4] flex items-center text-[22px] text-[#444]">
              <svg width="24" height="18" viewBox="0 0 24 18" className="ml-[24px]" fill="none" stroke="#777" strokeWidth="1.5"><rect x="1" y="1" width="22" height="16" /><rect x="12" y="9" width="11" height="8" fill="#ddd" /></svg>
              <span className="ml-[10px] w-[198px]">Polygon</span>
              <div className="w-[2px] h-full bg-[#e4e4e4]" />
              <div className="flex-1 flex justify-center"><Caret c="#555" w={16} h={9} /></div>
            </div>
            <div className="mt-[13px] flex gap-[12px]">
              <MarkBtn w="w-[88px]" icon={<ColorDots />} label="Color" />
              <MarkBtn w="w-[90px]" dim label="Size" icon={<svg width="30" height="28" viewBox="0 0 30 28" fill="none" stroke="#ddd" strokeWidth="2"><circle cx="18" cy="11" r="10" /><circle cx="8" cy="20" r="6.5" fill="#fafafa" /></svg>} />
              <MarkBtn w="w-[88px]" dim label="Label" icon={<svg width="28" height="24" viewBox="0 0 28 24" fill="none" stroke="#ddd" strokeWidth="2"><rect x="1" y="1" width="26" height="22" /><path d="M9 8V6H19V8M14 6V18M11 18H17" /></svg>} />
            </div>
            <div className="mt-[12px] flex gap-[12px]">
              <MarkBtn w="w-[88px]" icon={<DetailI />} label="Detail" />
              <MarkBtn w="w-[90px]" icon={<TipI />} label="Tooltip" />
              <MarkBtn w="w-[88px]" icon={<PathI />} label="Path" />
            </div>
            <div className="mt-[18px] flex flex-col gap-[6px]">
              <MarkRow icon={<ColorDots />}><Pill right={<SortDesc />}>Class</Pill></MarkRow>
              <MarkRow icon={<DetailI />}><Pill right={<SortAsc />}>Features</Pill></MarkRow>
              <MarkRow icon={<DetailI />}><Pill green right={<Delta />}>TC_Relative</Pill></MarkRow>
              <MarkRow icon={<PathI />}><Pill right={<SortAsc />}>Path (bin)</Pill></MarkRow>
              <MarkRow icon={<TipI />}><Pill green right={<Delta />}>TC_Relative</Pill></MarkRow>
            </div>
          </Card>
        </div>

        {/* main */}
        <div className="ml-[13px] w-[2105px] shrink-0 flex flex-col pb-[12px]">
          <Shelf cls="" label="Columns" t="X" icon={<svg width="20" height="22" viewBox="0 0 20 22" fill="#666"><rect x="0" y="6" width="4" height="16" /><rect x="8" y="6" width="4" height="16" /><rect x="16" y="6" width="4" height="16" /><rect x="0" y="0" width="4" height="3" /><rect x="8" y="0" width="4" height="3" /><rect x="16" y="0" width="4" height="3" /></svg>} />
          <Shelf cls="mt-[12px]" label="Rows" t="Y" icon={<svg width="24" height="20" viewBox="0 0 24 20" fill="#666"><rect x="0" y="0" width="4" height="4" /><rect x="7" y="0" width="17" height="4" /><rect x="0" y="8" width="4" height="4" /><rect x="7" y="8" width="17" height="4" /><rect x="0" y="16" width="4" height="4" /><rect x="7" y="16" width="17" height="4" /></svg>} />
          <div className="mt-[13px] flex-1 flex min-h-0">
            <div className="w-[1784px] shrink-0 bg-white border-2 border-[#d4d4d4]"><Chart /></div>
            <div className="ml-[13px] w-[308px] shrink-0 flex flex-col">
              <div className="h-[343px] border-2 border-[#d4d4d4] bg-white flex flex-col">
                <div className="h-[57px] shrink-0 bg-[#fafafa] pl-[13px] flex items-center text-[23px] text-[#444] [font-family:'Liberation_Sans',sans-serif]">CLASS</div>
                <div className="pl-[6px] flex flex-col">
                  {legend.map(([n, c]) => (
                    <div key={n} className="h-[40px] flex items-center">
                      <div className={`w-[28px] h-[28px] shrink-0 ${c}`} />
                      <span className="ml-[11px] text-[24px] font-bold text-[#111]">{n}</span>
                    </div>
                  ))}
                </div>
              </div>
              <div className="mt-[13px] h-[115px] border-2 border-[#d4d4d4] bg-[#fafafa] flex flex-col">
                <div className="pl-[13px] pt-[14px] text-[23px] text-[#444] leading-[28px] [font-family:'Liberation_Sans',sans-serif]">SELECT MEASURE</div>
                <div className="mt-[7px] ml-[13px] w-[284px] h-[40px] border-2 border-[#cdcdcd] bg-white flex justify-end">
                  <div className="w-[36px] h-full border-l-2 border-[#e2e2e2] flex items-center justify-center"><Caret c="#333" w={14} h={8} /></div>
                </div>
              </div>
            </div>
          </div>
        </div>
      </div>

      {/* tabs */}
      <div className="h-[62px] shrink-0 bg-[#e4e4e4] border-t-2 border-b-2 border-[#d2d2d2] flex items-center">
        <Tab w="w-[261px]" pl="pl-[20px]">
          <svg width="16" height="24" viewBox="0 0 16 24" fill="none" stroke="#777" strokeWidth="1.8" className="mr-[12px]"><rect x="1" y="1" width="14" height="22" rx="6" /><path d="M1 7C5 10 11 10 15 7" /></svg>
          Data Source
        </Tab>
        <Tab w="w-[303px]">Relative Value Bar Chart</Tab>
        <Tab w="w-[252px]">Relative Value Table</Tab>
        <Tab w="w-[132px]" active>Coxcomb</Tab>
        <Tab w="w-[401px]" pl="pl-[17px]">
          <svg width="22" height="24" viewBox="0 0 22 24" fill="none" stroke="#777" strokeWidth="1.8" className="mr-[10px]"><rect x="1" y="1" width="20" height="22" /><path d="M11 1V23M1 12H21" /></svg>
          Multiclass Classification of D...
        </Tab>
        <Tab w="w-[63px]" pl="pl-[19px]"><NewI kind={0} /></Tab>
        <Tab w="w-[63px]" pl="pl-[19px]"><NewI kind={1} /></Tab>
        <Tab w="w-[65px]" pl="pl-[19px]"><NewI kind={2} /></Tab>
      </div>

      {/* status */}
      <div className="flex-1 bg-[#e8e8e8] flex items-center text-[21px] text-[#333]">
        <div className="w-[2129px] shrink-0 flex pl-[24px] whitespace-nowrap">
          <span className="w-[146px]">1414 marks</span>
          <span className="w-[198px]">1 row by 1 column</span>
          <span>SUM of AGG(X): 17,979.9</span>
        </div>
        <div className="w-[255px] h-full border-l-2 border-[#c8c8c8]" />
        <div className="w-[54px] h-full border-l-2 border-[#c8c8c8]" />
        <div className="w-[54px] h-full border-l-2 border-[#c8c8c8]" />
        <div className="w-[95px] h-full border-l-2 border-[#c8c8c8]" />
        <div className="w-[143px] h-full border-l-2 border-[#c8c8c8] flex items-center justify-center gap-[16px]">
          <Nav last /><Nav /><Nav flip /><Nav last flip />
        </div>
        <div className="flex-1 h-full border-l-2 border-[#c8c8c8] flex items-center pl-[17px] gap-[19px]">
          <div className="grid grid-cols-3 gap-[2px]">
            {Array.from({ length: 9 }).map((_, i) => <div key={i} className="w-[6px] h-[6px] bg-[#bdbdbd]" />)}
          </div>
          <div className="flex flex-col gap-[3px]">
            <div className="w-[22px] h-[14px] bg-[#bdbdbd]" />
            <div className="flex gap-[2px]"><div className="w-[6px] h-[6px] bg-[#bdbdbd]" /><div className="w-[6px] h-[6px] bg-[#bdbdbd]" /><div className="w-[6px] h-[6px] bg-[#bdbdbd]" /></div>
          </div>
          <div className="w-[23px] h-[22px] bg-[#666]" />
        </div>
      </div>

      <Dialog />
    </div>
  );
}
